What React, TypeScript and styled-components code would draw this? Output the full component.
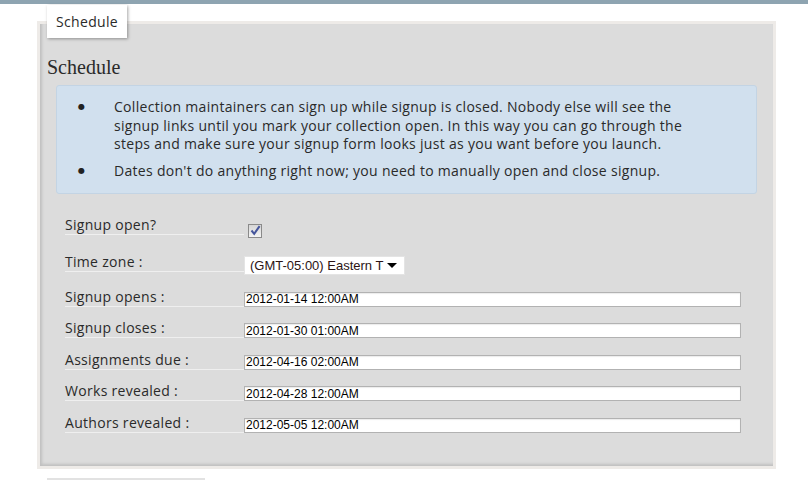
import styled, { createGlobalStyle } from 'styled-components';

const GlobalStyle = createGlobalStyle`
  html, body {
    margin: 0;
    padding: 0;
    background: #ffffff;
  }
  body {
    font-family: "Open Sans", "DejaVu Sans", sans-serif;
    color: #2a2a2a;
  }
`;

const TopBar = styled.div`
  height: 4px;
  background-color: #8ea4b1;
`;

const Page = styled.div`
  padding: 1px 0 0 37px;
`;

const Tab = styled.div`
  position: relative;
  z-index: 1;
  display: inline-block;
  margin-left: 10px;
  width: 80px;
  height: 33px;
  box-sizing: border-box;
  background: #ffffff;
  box-shadow: 1px 1px 3px rgba(0, 0, 0, 0.35);
  font-size: 14px;
  letter-spacing: 0.3px;
  line-height: 33px;
  text-align: center;
  color: #2a2a2a;
`;

const Panel = styled.section`
  margin-top: -17px;
  width: 739px;
  height: 448px;
  box-sizing: border-box;
  border: 3px solid #eeebe8;
  background-color: #dcdcdc;
  box-shadow: inset 2px -2px 3px rgba(0, 0, 0, 0.13);
  padding: 33px 7px 0 7px;
`;

const Heading = styled.h2`
  margin: 0 0 8px;
  font-family: "Liberation Serif", "DejaVu Serif", serif;
  font-weight: normal;
  font-size: 20px;
  line-height: 20px;
  color: #2a2a2a;
`;

const Notice = styled.ul`
  list-style: none;
  margin: 0 9px;
  padding: 12px 0;
  background-color: #d1e0ee;
  border: 1px solid #c3d4e4;
  border-radius: 3px;
  font-size: 14px;
  letter-spacing: 0.3px;
  line-height: 18.5px;
`;

const NoticeItem = styled.li`
  display: flex;
  & + & {
    margin-top: 8.5px;
  }
`;

const Bullet = styled.span`
  flex: 0 0 57px;
  box-sizing: border-box;
  padding-left: 21px;
  font-family: "DejaVu Sans", sans-serif;
  font-size: 8px;
  line-height: 18.5px;
  color: #222222;
`;

const NoticeText = styled.span`
  width: 592px;
`;

const Form = styled.div`
  margin: 22px 0 0 18px;
  width: 676px;
`;

const Row = styled.div<{ $h: number }>`
  display: grid;
  grid-template-columns: 179px 1fr;
  align-items: start;
  height: ${p => p.$h}px;
`;

const Label = styled.label`
  font-size: 14px;
  letter-spacing: 0.3px;
  line-height: 18px;
  border-bottom: 1px solid #efefef;
`;

const Checkbox = styled.span`
  display: flex;
  align-items: center;
  justify-content: center;
  margin: 8px 0 0 4px;
  width: 14px;
  height: 14px;
  box-sizing: border-box;
  border: 1px solid #8a8a8a;
  background: linear-gradient(#d6d6d6, #f4f4f4);
`;

const SelectBox = styled.div`
  display: flex;
  align-items: center;
  justify-content: space-between;
  margin-top: 3px;
  width: 161px;
  height: 19px;
  box-sizing: border-box;
  padding: 0 7px 0 5px;
  background: #ffffff;
  border: 1px solid #e4e4e4;
  font-family: "Liberation Sans", Arial, sans-serif;
  font-size: 13px;
  color: #2b1414;
`;

const Arrow = styled.span`
  width: 0;
  height: 0;
  border-left: 5px solid transparent;
  border-right: 5px solid transparent;
  border-top: 5px solid #000000;
`;

const DateInput = styled.input`
  margin-top: 4px;
  width: 497px;
  height: 15px;
  box-sizing: border-box;
  padding: 0 1px;
  border: 1px solid #b2b2b2;
  box-shadow: inset 0 1px 1px rgba(0, 0, 0, 0.08);
  background: #ffffff;
  font-family: "Liberation Sans", Arial, sans-serif;
  font-size: 12px;
  color: #000000;
  outline: none;
`;

const NextBlock = styled.div`
  margin: 9px 0 0 10px;
  width: 158px;
  border-top: 2px solid #e2e2e2;
`;

const dates = [
  { label: 'Signup opens', value: '2012-01-14 12:00AM' },
  { label: 'Signup closes', value: '2012-01-30 01:00AM' },
  { label: 'Assignments due', value: '2012-04-16 02:00AM' },
  { label: 'Works revealed', value: '2012-04-28 12:00AM' },
  { label: 'Authors revealed', value: '2012-05-05 12:00AM' },
];

export default function App() {
  return (
    <>
      <GlobalStyle />
      <TopBar />
      <Page>
        <Tab>Schedule</Tab>
        <Panel>
          <Heading>Schedule</Heading>
          <Notice>
            <NoticeItem>
              <Bullet>●</Bullet>
              <NoticeText>
                Collection maintainers can sign up while signup is closed. Nobody else will see the
                signup links until you mark your collection open. In this way you can go through the
                steps and make sure your signup form looks just as you want before you launch.
              </NoticeText>
            </NoticeItem>
            <NoticeItem>
              <Bullet>●</Bullet>
              <NoticeText>
                Dates don't do anything right now; you need to manually open and close signup.
              </NoticeText>
            </NoticeItem>
          </Notice>
          <Form>
            <Row $h={37}>
              <Label>Signup open?</Label>
              <Checkbox>
                <svg width="11" height="11" viewBox="0 0 11 11">
                  <path d="M1.5 5.5 L4.2 8.8 L9.6 1.2" fill="none" stroke="#46569c" strokeWidth="2" />
                </svg>
              </Checkbox>
            </Row>
            <Row $h={35}>
              <Label>Time zone :</Label>
              <SelectBox>
                <span>(GMT-05:00) Eastern T</span>
                <Arrow />
              </SelectBox>
            </Row>
            {dates.map(d => (
              <Row $h={31.5} key={d.label}>
                <Label>{d.label} :</Label>
                <DateInput type="text" defaultValue={d.value} readOnly />
              </Row>
            ))}
          </Form>
        </Panel>
        <NextBlock />
      </Page>
    </>
  );
}
